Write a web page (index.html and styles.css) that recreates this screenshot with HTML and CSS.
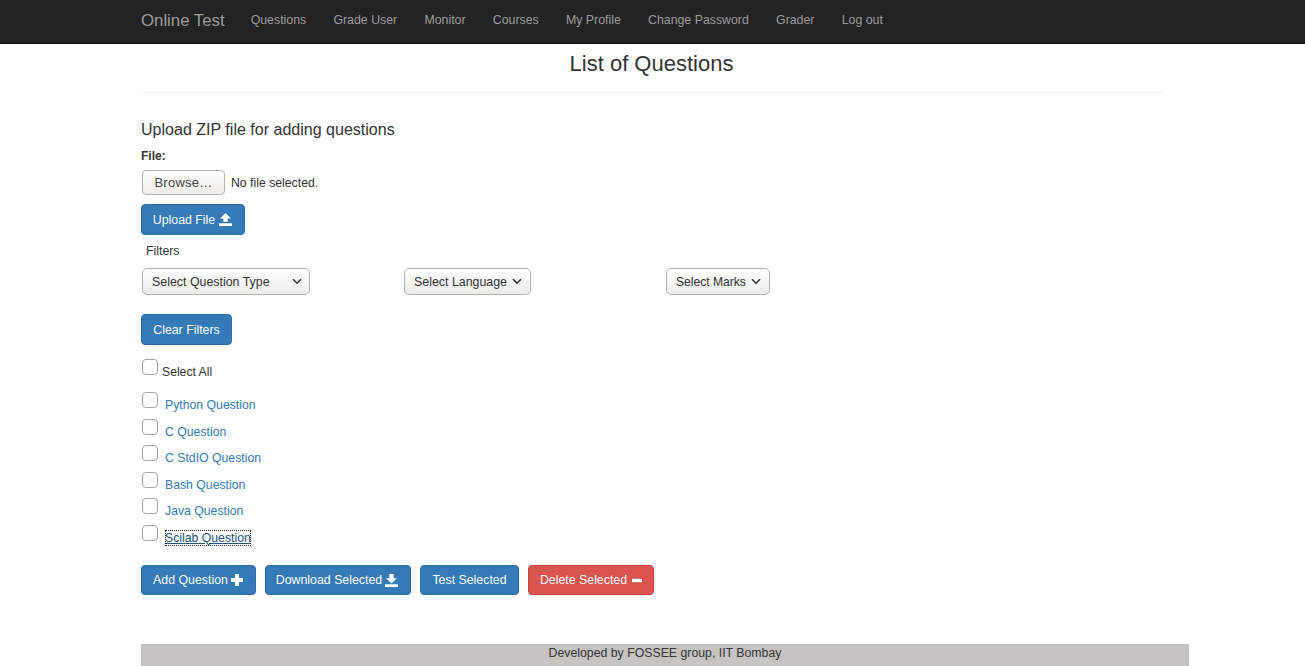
FILE: index.html
```html
<!DOCTYPE html>
<html lang="en">
<head>
<meta charset="utf-8">
<title>List of Questions</title>
<link rel="stylesheet" href="styles.css">
</head>
<body>
<nav class="navbar">
  <a class="brand" href="#">Online Test</a>
  <ul class="nav-links">
    <li><a href="#">Questions</a></li>
    <li><a href="#">Grade User</a></li>
    <li><a href="#">Monitor</a></li>
    <li><a href="#">Courses</a></li>
    <li><a href="#">My Profile</a></li>
    <li><a href="#">Change Password</a></li>
    <li><a href="#">Grader</a></li>
    <li><a href="#">Log out</a></li>
  </ul>
</nav>
<main class="container">
  <header class="page-header">
    <h1>List of Questions</h1>
  </header>
  <h4 class="upload-title">Upload ZIP file for adding questions</h4>
  <label class="file-label">File:</label>
  <div class="file-row">
    <button class="browse" type="button">Browse…</button>
    <span class="file-name">No file selected.</span>
  </div>
  <button class="btn btn-primary upload-btn" type="button">Upload File
    <svg class="icon upload-icon" viewBox="0 0 13 13"><path d="M6.5 0 12 5.6H8.7v3.2H4.3V5.6H1zM0 10.2h13V13H0z"/></svg>
  </button>
  <div class="filters-label">Filters</div>
  <div class="filters">
    <div class="filter-col"><span class="select-wrap select-type"><select><option>Select Question Type</option></select><svg class="chev" viewBox="0 0 10 7"><path d="M1 1.2 5 5.2 9 1.2"/></svg></span></div>
    <div class="filter-col"><span class="select-wrap select-lang"><select><option>Select Language</option></select><svg class="chev" viewBox="0 0 10 7"><path d="M1 1.2 5 5.2 9 1.2"/></svg></span></div>
    <div class="filter-col"><span class="select-wrap select-marks"><select><option>Select Marks</option></select><svg class="chev" viewBox="0 0 10 7"><path d="M1 1.2 5 5.2 9 1.2"/></svg></span></div>
  </div>
  <button class="btn btn-primary clear-btn" type="button">Clear Filters</button>
  <div class="select-all"><input class="check" type="checkbox"><span>Select All</span></div>
  <ul class="questions">
    <li><input class="check" type="checkbox"><a href="#">Python Question</a></li>
    <li><input class="check" type="checkbox"><a href="#">C Question</a></li>
    <li><input class="check" type="checkbox"><a href="#">C StdIO Question</a></li>
    <li><input class="check" type="checkbox"><a href="#">Bash Question</a></li>
    <li><input class="check" type="checkbox"><a href="#">Java Question</a></li>
    <li><input class="check" type="checkbox"><a class="focused" href="#">Scilab Question</a></li>
  </ul>
  <div class="actions">
    <button class="btn btn-primary add-btn" type="button">Add Question
      <svg class="icon plus" viewBox="0 0 12 12"><path d="M4 0h4v4h4v4H8v4H4V8H0V4h4z"/></svg>
    </button>
    <button class="btn btn-primary dl-btn" type="button">Download Selected
      <svg class="icon" viewBox="0 0 13 13"><path d="M4.3 0h4.4v4.2H12L6.5 9.6 1 4.2h3.3zM0 10.2h13V13H0z"/></svg>
    </button>
    <button class="btn btn-primary test-btn" type="button">Test Selected</button>
    <button class="btn btn-danger del-btn" type="button">Delete Selected
      <svg class="icon minus" viewBox="0 0 10 13"><path d="M0 4.8h10v3.4H0z"/></svg>
    </button>
  </div>
  <footer class="footer">Developed by FOSSEE group, IIT Bombay</footer>
</main>
</body>
</html>
```
FILE: styles.css
```css
* { box-sizing: border-box; }
html, body { margin: 0; padding: 0; }
body {
  font-family: "Liberation Sans", Arial, sans-serif;
  font-size: 13px;
  line-height: 18px;
  color: #333;
  background: #fff;
  height: 666px;
  overflow: hidden;
}
a { color: #337ab7; text-decoration: none; }

.navbar {
  display: flex;
  align-items: center;
  height: 44px;
  padding: 0 0 1px 141px;
  background: #222;
  border-bottom: 1px solid #080808;
}
.brand { color: #9d9d9d; font-size: 16.8px; margin-right: 12.4px; }
.nav-links { display: flex; list-style: none; margin: -2px 0 0; padding: 0; }
.nav-links a { display: block; color: #9d9d9d; font-size: 12.35px; padding: 0 13.6px; }

.container { width: 1048px; margin-left: 141px; }
.page-header {
  width: 1021px;
  height: 49px;
  border-bottom: 1px solid #eee;
  text-align: center;
}
.page-header h1 { margin: 0; padding-top: 7px; font-size: 22px; line-height: 26px; font-weight: 400; }
.upload-title { margin: 26px 0 0; font-size: 16.05px; line-height: 20px; font-weight: 400; }
.file-label { display: block; margin-top: 9px; font-size: 12px; line-height: 16px; font-weight: 700; }
.file-row { display: flex; align-items: center; margin: 6px 0 0 1px; height: 25px; }
.browse {
  width: 83px; height: 25px; padding: 0;
  font: 13px "Liberation Sans", Arial, sans-serif;
  letter-spacing: .25px;
  color: #444;
  background: linear-gradient(#fff, #eeedeb);
  border: 1px solid #b5b3b0;
  border-radius: 4px;
}
.file-name { margin-left: 6px; font-size: 12.25px; }

.btn {
  display: inline-flex; align-items: center; justify-content: center;
  height: 31px; padding: 0;
  font: 12.35px "Liberation Sans", Arial, sans-serif;
  color: #fff;
  border: 1px solid transparent;
  border-radius: 4px;
}
.btn-primary { background: #337ab7; border-color: #2e6da4; }
.btn-danger { background: #d9534f; border-color: #d43f3a; }
.icon { width: 13px; height: 13px; margin-left: 3px; fill: #fff; }
.upload-btn { display: flex; width: 104px; margin-top: 9px; padding-right: 1px; }
.upload-icon { margin-left: 4px; }

.filters-label { margin: 8px 0 0 5px; font-size: 12.3px; line-height: 16px; }
.filters { display: flex; margin-top: 9px; }
.filter-col { width: 262px; padding-left: 1px; }
.select-wrap { position: relative; display: block; height: 27px; }
.select-wrap select {
  appearance: none;
  display: block;
  width: 100%; height: 27px;
  padding: 0 0 0 9px;
  font: 12.4px "Liberation Sans", Arial, sans-serif;
  color: #333;
  background: linear-gradient(#fff, #ecebea);
  border: 1px solid #b5b3b0;
  border-radius: 5px;
}
.select-type { width: 168px; }
.select-lang { width: 127px; }
.select-marks { width: 104px; }
.select-marks select { font-size: 12.1px; }
.chev {
  position: absolute; right: 8px; top: 10px;
  width: 10px; height: 7px;
  fill: none; stroke: #333; stroke-width: 1.6;
  pointer-events: none;
}
.select-lang .chev, .select-marks .chev { right: 9px; }
.clear-btn { display: flex; width: 91px; margin-top: 19px; }

.check {
  appearance: none;
  flex: none;
  width: 16px; height: 16px;
  margin: 0 0 0 1px;
  background: #fff;
  border: 1px solid #a3a2a0;
  border-radius: 4px;
}
.select-all { display: flex; align-items: flex-start; height: 24px; margin-top: 14px; font-size: 12.2px; }
.select-all span { margin: 4px 0 0 4px; }
.questions { list-style: none; margin: 9px 0 0; padding: 0; }
.questions li { display: flex; align-items: flex-start; height: 26.5px; font-size: 12.25px; }
.questions a { margin: 5px 0 0 7px; line-height: 16px; height: 16px; }
.questions a.focused {
  color: #23527c;
  text-decoration: underline;
  outline: 1px dotted #222;
  outline-offset: -1px;
}
.actions { display: flex; margin-top: 14px; }
.actions .btn { height: 30px; }
.add-btn { width: 115px; padding-right: 1px; }
.plus { width: 12px; height: 12px; margin-left: 3px; }
.dl-btn { width: 146px; margin-left: 9px; padding-right: 2px; }
.test-btn { width: 99px; margin-left: 9px; }
.del-btn { width: 126px; margin-left: 9px; }
.minus { width: 10px; margin-left: 5px; }
.footer {
  height: 22px;
  margin-top: 49px;
  background: #c6c3c3;
  text-align: center;
  font-size: 12.3px;
  line-height: 18px;
}
```
